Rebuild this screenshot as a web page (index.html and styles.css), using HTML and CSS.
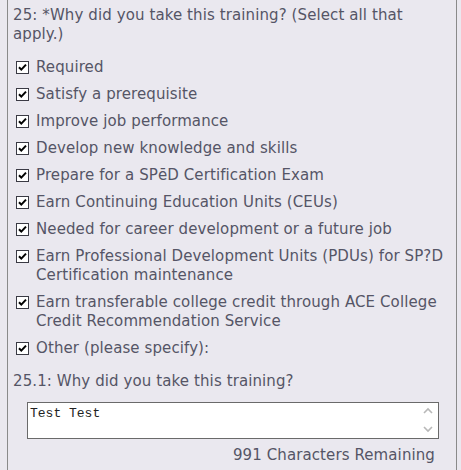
FILE: index.html
```html
<!DOCTYPE html>
<html>
<head>
<meta charset="utf-8">
<link rel="stylesheet" href="styles.css">
</head>
<body>
<div class="panel">
  <div class="question">25: *Why did you take this training? (Select all that apply.)</div>
  <ul class="choices">
    <li><span class="cb"><svg viewBox="0 0 13 13" width="13" height="13"><rect x="0.5" y="0.5" width="12" height="12" fill="#fff" stroke="#3a3a44"/><path d="M3 6.2 L5.3 8.6 L10 3.6" fill="none" stroke="#000" stroke-width="2"/></svg></span><span class="lbl">Required</span></li>
    <li><span class="cb"><svg viewBox="0 0 13 13" width="13" height="13"><rect x="0.5" y="0.5" width="12" height="12" fill="#fff" stroke="#3a3a44"/><path d="M3 6.2 L5.3 8.6 L10 3.6" fill="none" stroke="#000" stroke-width="2"/></svg></span><span class="lbl">Satisfy a prerequisite</span></li>
    <li><span class="cb"><svg viewBox="0 0 13 13" width="13" height="13"><rect x="0.5" y="0.5" width="12" height="12" fill="#fff" stroke="#3a3a44"/><path d="M3 6.2 L5.3 8.6 L10 3.6" fill="none" stroke="#000" stroke-width="2"/></svg></span><span class="lbl">Improve job performance</span></li>
    <li><span class="cb"><svg viewBox="0 0 13 13" width="13" height="13"><rect x="0.5" y="0.5" width="12" height="12" fill="#fff" stroke="#3a3a44"/><path d="M3 6.2 L5.3 8.6 L10 3.6" fill="none" stroke="#000" stroke-width="2"/></svg></span><span class="lbl">Develop new knowledge and skills</span></li>
    <li><span class="cb"><svg viewBox="0 0 13 13" width="13" height="13"><rect x="0.5" y="0.5" width="12" height="12" fill="#fff" stroke="#3a3a44"/><path d="M3 6.2 L5.3 8.6 L10 3.6" fill="none" stroke="#000" stroke-width="2"/></svg></span><span class="lbl">Prepare for a SP&#275;D Certification Exam</span></li>
    <li><span class="cb"><svg viewBox="0 0 13 13" width="13" height="13"><rect x="0.5" y="0.5" width="12" height="12" fill="#fff" stroke="#3a3a44"/><path d="M3 6.2 L5.3 8.6 L10 3.6" fill="none" stroke="#000" stroke-width="2"/></svg></span><span class="lbl">Earn Continuing Education Units (CEUs)</span></li>
    <li><span class="cb"><svg viewBox="0 0 13 13" width="13" height="13"><rect x="0.5" y="0.5" width="12" height="12" fill="#fff" stroke="#3a3a44"/><path d="M3 6.2 L5.3 8.6 L10 3.6" fill="none" stroke="#000" stroke-width="2"/></svg></span><span class="lbl">Needed for career development or a future job</span></li>
    <li><span class="cb"><svg viewBox="0 0 13 13" width="13" height="13"><rect x="0.5" y="0.5" width="12" height="12" fill="#fff" stroke="#3a3a44"/><path d="M3 6.2 L5.3 8.6 L10 3.6" fill="none" stroke="#000" stroke-width="2"/></svg></span><span class="lbl">Earn Professional Development Units (PDUs) for SP?D Certification maintenance</span></li>
    <li><span class="cb"><svg viewBox="0 0 13 13" width="13" height="13"><rect x="0.5" y="0.5" width="12" height="12" fill="#fff" stroke="#3a3a44"/><path d="M3 6.2 L5.3 8.6 L10 3.6" fill="none" stroke="#000" stroke-width="2"/></svg></span><span class="lbl">Earn transferable college credit through ACE College Credit Recommendation Service</span></li>
    <li><span class="cb"><svg viewBox="0 0 13 13" width="13" height="13"><rect x="0.5" y="0.5" width="12" height="12" fill="#fff" stroke="#3a3a44"/><path d="M3 6.2 L5.3 8.6 L10 3.6" fill="none" stroke="#000" stroke-width="2"/></svg></span><span class="lbl">Other (please specify):</span></li>
  </ul>
  <div class="sub">25.1: Why did you take this training?</div>
  <div class="textbox">
    <div class="tb-text">Test Test</div>
    <div class="tb-scroll"><svg width="10" height="28" viewBox="0 0 10 28"><path d="M1 7 L5 3 L9 7" fill="none" stroke="#b8b8b8" stroke-width="1.6"/><path d="M1 21 L5 25 L9 21" fill="none" stroke="#b8b8b8" stroke-width="1.6"/></svg></div>
  </div>
  <div class="remaining">991 Characters Remaining</div>
</div>
</body>
</html>
```
FILE: styles.css
```css
html, body {
  margin: 0;
  padding: 0;
  background: #eae8ef;
}
body {
  padding-left: 7px;
  width: 461px;
  height: 470px;
  box-sizing: border-box;
  overflow: hidden;
}
.panel {
  width: 450px;
  height: 470px;
  box-sizing: border-box;
  border-left: 1px solid #8a8a8a;
  border-right: 1px solid #8a8a8a;
  padding: 6px 6px 0 5px;
  font-family: "DejaVu Sans", Verdana, sans-serif;
  font-size: 15px;
  line-height: 19px;
  letter-spacing: 0.1px;
  color: #555566;
}
.question {
  margin: 0;
}
.choices {
  list-style: none;
  margin: 14px 0 0 0;
  padding: 0 0 0 3px;
}
.choices li {
  display: flex;
  align-items: flex-start;
  gap: 7px;
  margin-bottom: 8px;
}
.cb {
  flex: none;
  width: 13px;
  height: 13px;
  margin-top: 3px;
  display: block;
}
.cb svg {
  display: block;
}
.sub {
  margin-top: 14px;
}
.textbox {
  margin: 11px 0 0 14px;
  width: 412px;
  height: 37px;
  box-sizing: border-box;
  border: 1px solid #6a6a6a;
  background: #fff;
  display: flex;
  justify-content: space-between;
}
.tb-text {
  font-family: "Liberation Mono", "Courier New", monospace;
  font-size: 13px;
  line-height: 15px;
  letter-spacing: 0;
  color: #222;
  padding: 3px 0 0 2px;
}
.tb-scroll {
  padding: 3px 5px 0 0;
}
.tb-scroll svg {
  display: block;
}
.remaining {
  text-align: right;
  padding-right: 15px;
  margin-top: 7px;
}
```
